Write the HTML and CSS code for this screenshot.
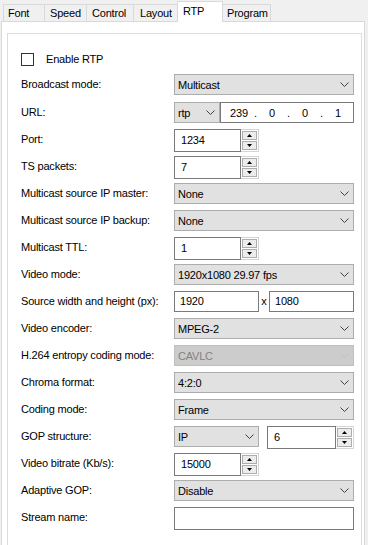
FILE: index.html
```html
<!DOCTYPE html>
<html lang="en">
<head>
<meta charset="UTF-8">
<title>RTP settings</title>
<link rel="stylesheet" href="styles.css">
</head>
<body>
  <div class="tabs">
    <div class="tab tab-font">Font</div>
    <div class="tab tab-speed">Speed</div>
    <div class="tab tab-control">Control</div>
    <div class="tab tab-layout">Layout</div>
    <div class="tab tab-rtp active">RTP</div>
    <div class="tab tab-program">Program</div>
  </div>

  <div class="panel">
    <div class="group">
      <div class="check-row">
        <span class="checkbox"></span>
        <span class="check-label">Enable RTP</span>
      </div>

      <div class="row first">
        <div class="label">Broadcast mode:</div>
        <div class="combo"><span>Multicast</span><svg class="chevron" width="9" height="5" viewBox="0 0 9 5"><polyline points="0.5,0.5 4.5,4.5 8.5,0.5" fill="none" stroke="#404040"/></svg></div>
      </div>

      <div class="row">
        <div class="label">URL:</div>
        <div class="combo combo-rtp"><span>rtp</span><svg class="chevron" width="9" height="5" viewBox="0 0 9 5"><polyline points="0.5,0.5 4.5,4.5 8.5,0.5" fill="none" stroke="#404040"/></svg></div>
        <div class="ip">
          <span class="ip-part">239</span><span class="ip-dot">.</span>
          <span class="ip-part">0</span><span class="ip-dot">.</span>
          <span class="ip-part">0</span><span class="ip-dot">.</span>
          <span class="ip-part">1</span>
        </div>
      </div>

      <div class="row">
        <div class="label">Port:</div>
        <div class="spin">
          <div class="spin-field">1234</div>
          <div class="spin-btns">
            <div class="spin-btn"><svg width="5" height="3" viewBox="0 0 5 3"><polygon points="2.5,0 5,3 0,3" fill="#000"/></svg></div>
            <div class="spin-btn"><svg width="5" height="3" viewBox="0 0 5 3"><polygon points="0,0 5,0 2.5,3" fill="#000"/></svg></div>
          </div>
        </div>
      </div>

      <div class="row">
        <div class="label">TS packets:</div>
        <div class="spin">
          <div class="spin-field">7</div>
          <div class="spin-btns">
            <div class="spin-btn"><svg width="5" height="3" viewBox="0 0 5 3"><polygon points="2.5,0 5,3 0,3" fill="#000"/></svg></div>
            <div class="spin-btn"><svg width="5" height="3" viewBox="0 0 5 3"><polygon points="0,0 5,0 2.5,3" fill="#000"/></svg></div>
          </div>
        </div>
      </div>

      <div class="row">
        <div class="label">Multicast source IP master:</div>
        <div class="combo"><span>None</span><svg class="chevron" width="9" height="5" viewBox="0 0 9 5"><polyline points="0.5,0.5 4.5,4.5 8.5,0.5" fill="none" stroke="#404040"/></svg></div>
      </div>

      <div class="row">
        <div class="label">Multicast source IP backup:</div>
        <div class="combo"><span>None</span><svg class="chevron" width="9" height="5" viewBox="0 0 9 5"><polyline points="0.5,0.5 4.5,4.5 8.5,0.5" fill="none" stroke="#404040"/></svg></div>
      </div>

      <div class="row">
        <div class="label">Multicast TTL:</div>
        <div class="spin">
          <div class="spin-field">1</div>
          <div class="spin-btns">
            <div class="spin-btn"><svg width="5" height="3" viewBox="0 0 5 3"><polygon points="2.5,0 5,3 0,3" fill="#000"/></svg></div>
            <div class="spin-btn"><svg width="5" height="3" viewBox="0 0 5 3"><polygon points="0,0 5,0 2.5,3" fill="#000"/></svg></div>
          </div>
        </div>
      </div>

      <div class="row">
        <div class="label">Video mode:</div>
        <div class="combo"><span>1920x1080 29.97 fps</span><svg class="chevron" width="9" height="5" viewBox="0 0 9 5"><polyline points="0.5,0.5 4.5,4.5 8.5,0.5" fill="none" stroke="#404040"/></svg></div>
      </div>

      <div class="row">
        <div class="label">Source width and height (px):</div>
        <div class="text-input half">1920</div>
        <div class="times">x</div>
        <div class="text-input half">1080</div>
      </div>

      <div class="row">
        <div class="label">Video encoder:</div>
        <div class="combo"><span>MPEG-2</span><svg class="chevron" width="9" height="5" viewBox="0 0 9 5"><polyline points="0.5,0.5 4.5,4.5 8.5,0.5" fill="none" stroke="#404040"/></svg></div>
      </div>

      <div class="row">
        <div class="label">H.264 entropy coding mode:</div>
        <div class="combo disabled"><span>CAVLC</span><svg class="chevron" width="9" height="5" viewBox="0 0 9 5"><polyline points="0.5,0.5 4.5,4.5 8.5,0.5" fill="none" stroke="#bfbfbf"/></svg></div>
      </div>

      <div class="row">
        <div class="label">Chroma format:</div>
        <div class="combo"><span>4:2:0</span><svg class="chevron" width="9" height="5" viewBox="0 0 9 5"><polyline points="0.5,0.5 4.5,4.5 8.5,0.5" fill="none" stroke="#404040"/></svg></div>
      </div>

      <div class="row">
        <div class="label">Coding mode:</div>
        <div class="combo"><span>Frame</span><svg class="chevron" width="9" height="5" viewBox="0 0 9 5"><polyline points="0.5,0.5 4.5,4.5 8.5,0.5" fill="none" stroke="#404040"/></svg></div>
      </div>

      <div class="row">
        <div class="label">GOP structure:</div>
        <div class="combo combo-gop"><span>IP</span><svg class="chevron" width="9" height="5" viewBox="0 0 9 5"><polyline points="0.5,0.5 4.5,4.5 8.5,0.5" fill="none" stroke="#404040"/></svg></div>
        <div class="spin spin-gop">
          <div class="spin-field">6</div>
          <div class="spin-btns">
            <div class="spin-btn"><svg width="5" height="3" viewBox="0 0 5 3"><polygon points="2.5,0 5,3 0,3" fill="#000"/></svg></div>
            <div class="spin-btn"><svg width="5" height="3" viewBox="0 0 5 3"><polygon points="0,0 5,0 2.5,3" fill="#000"/></svg></div>
          </div>
        </div>
      </div>

      <div class="row">
        <div class="label">Video bitrate (Kb/s):</div>
        <div class="spin">
          <div class="spin-field">15000</div>
          <div class="spin-btns">
            <div class="spin-btn"><svg width="5" height="3" viewBox="0 0 5 3"><polygon points="2.5,0 5,3 0,3" fill="#000"/></svg></div>
            <div class="spin-btn"><svg width="5" height="3" viewBox="0 0 5 3"><polygon points="0,0 5,0 2.5,3" fill="#000"/></svg></div>
          </div>
        </div>
      </div>

      <div class="row">
        <div class="label">Adaptive GOP:</div>
        <div class="combo"><span>Disable</span><svg class="chevron" width="9" height="5" viewBox="0 0 9 5"><polyline points="0.5,0.5 4.5,4.5 8.5,0.5" fill="none" stroke="#404040"/></svg></div>
      </div>

      <div class="row">
        <div class="label">Stream name:</div>
        <div class="text-input wide"></div>
      </div>
    </div>
  </div>
</body>
</html>
```

FILE: styles.css
```css
body {
    margin: 0;
    background-color: #f0f0f0;
    font-family: "Liberation Sans", Arial, sans-serif;
    font-size: 11px;
    letter-spacing: -0.2px;
    color: #000;
    height: 545px;
    overflow: hidden;
}

/* tab strip */
.tabs {
    display: flex;
    align-items: flex-end;
    height: 21px;
    padding-left: 3px;
}
.tab {
    box-sizing: border-box;
    height: 17px;
    line-height: 16px;
    border: 1px solid #d9d9d9;
    border-bottom: none;
    background-color: #f0f0f0;
    margin-left: -1px;
    padding-left: 5px;
    white-space: nowrap;
}
.tab-font { margin-left: 0; width: 42px; padding-left: 4px; }
.tab-speed { width: 43px; }
.tab-control { width: 48px; }
.tab-layout { width: 45px; padding-left: 6px; }
.tab-rtp { width: 46px; }
.tab-program { width: 49px; padding-left: 4px; }
.tab.active {
    height: 21px;
    line-height: 18px;
    margin-bottom: -1px;
    background-color: #fff;
    position: relative;
    z-index: 1;
}

/* page */
.panel {
    box-sizing: border-box;
    margin-left: 1px;
    width: 364px;
    height: 524px;
    border: 1px solid #d9d9d9;
    border-bottom: none;
    background-color: #fff;
    padding: 11px 2px 0 5px;
}
.group {
    box-sizing: border-box;
    height: 100%;
    border: 1px solid #dcdcdc;
    border-bottom: none;
    padding: 15px 7px 0 13px;
}

.check-row {
    display: flex;
    align-items: center;
    height: 20px;
    margin-bottom: 5px;
}
.checkbox {
    box-sizing: border-box;
    width: 13px;
    height: 13px;
    border: 1px solid #333;
    background-color: #fff;
}
.check-label {
    margin-left: 12px;
}

.row {
    display: flex;
    align-items: flex-start;
    height: 27px;
}
.row > * {
    flex-shrink: 0;
}
.row.first {
    height: 28px;
}
.label {
    width: 153px;
    line-height: 21px;
    white-space: nowrap;
}

/* combo boxes */
.combo {
    box-sizing: border-box;
    display: flex;
    align-items: center;
    justify-content: space-between;
    width: 180px;
    height: 21px;
    border: 1px solid #adadad;
    background-color: #e1e1e1;
    padding: 0 4px 0 3px;
}
.combo.disabled {
    background-color: #cccccc;
    border-color: #bfbfbf;
    color: #838383;
}
.combo-rtp {
    width: 46px;
}
.combo-gop {
    width: 85px;
    margin-right: 8px;
}

/* ip address field */
.ip {
    box-sizing: border-box;
    display: flex;
    align-items: center;
    width: 134px;
    height: 21px;
    border: 1px solid #7a7a7a;
    padding-left: 5px;
}
.ip-part {
    width: 26px;
    text-align: center;
}
.ip-dot {
    width: 7px;
    text-align: center;
}

/* text fields */
.text-input {
    box-sizing: border-box;
    height: 21px;
    line-height: 19px;
    border: 1px solid #7a7a7a;
    background-color: #fff;
    padding-left: 5px;
}
.text-input.half {
    width: 85px;
}
.text-input.wide {
    width: 180px;
    height: 23px;
}
.times {
    width: 10px;
    line-height: 21px;
    text-align: center;
}

/* spin boxes */
.spin {
    display: flex;
    width: 85px;
    height: 23px;
}
.spin-gop {
    width: 87px;
}
.spin-field {
    box-sizing: border-box;
    flex: 1;
    border: 1px solid #7a7a7a;
    line-height: 21px;
    padding-left: 6px;
}
.spin-btns {
    box-sizing: border-box;
    display: flex;
    flex-direction: column;
    gap: 1px;
    width: 18px;
    border: 1px solid #d4d4d4;
    border-left: none;
    padding: 1px;
}
.spin-btn {
    box-sizing: border-box;
    flex: 1;
    display: flex;
    align-items: center;
    justify-content: center;
    border: 1px solid #adadad;
    background-color: #ececec;
}
```
